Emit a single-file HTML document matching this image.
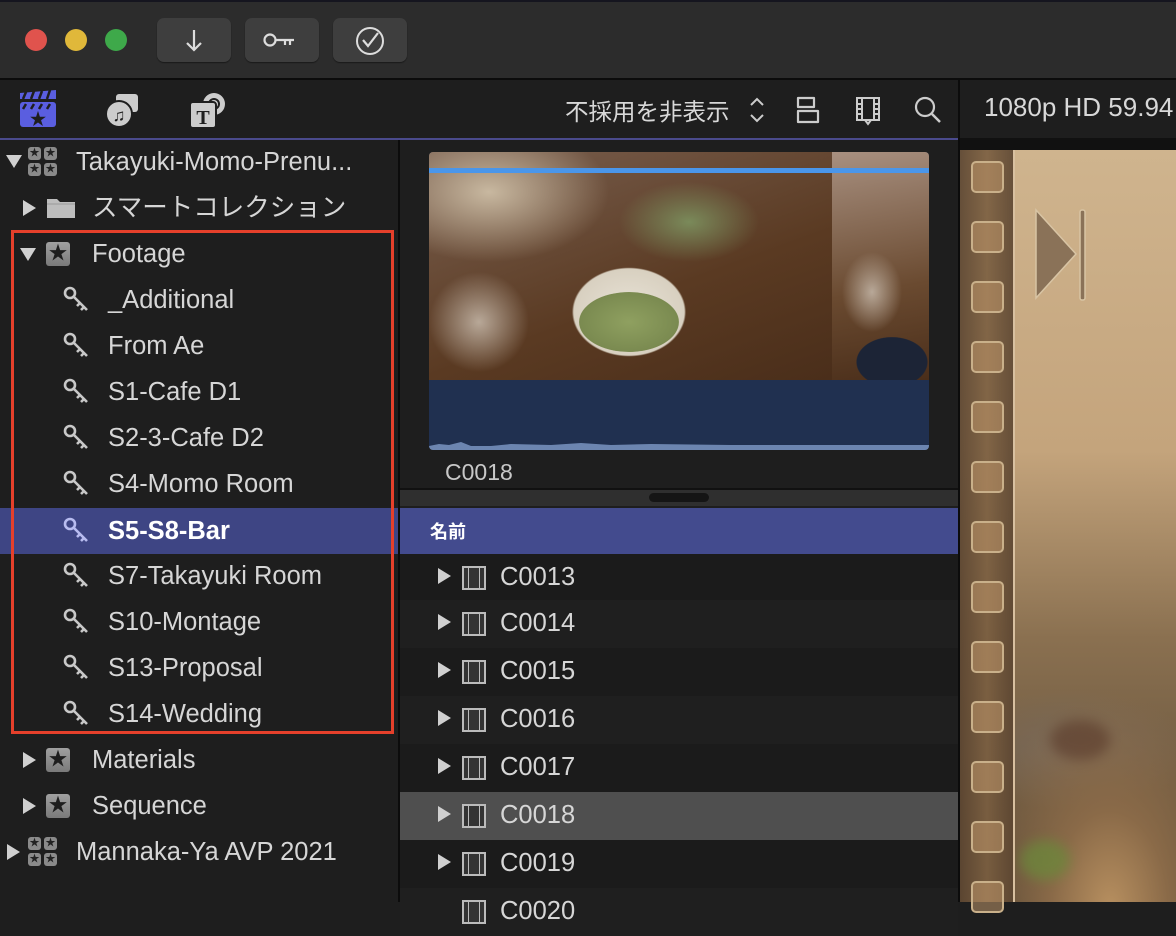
<!DOCTYPE html>
<html><head><meta charset="utf-8"><style>
*{margin:0;padding:0;box-sizing:border-box}
body{width:1176px;height:902px;overflow:hidden;background:#1e1e1e;font-family:"Liberation Sans","Noto Sans CJK JP",sans-serif;color:#d6d6d6;position:relative}
.abs{position:absolute}
.btn{position:absolute;top:18px;width:74px;height:44px;background:#3e3e3e;border-radius:7px;box-shadow:0 1px 1px #1a1a1a}
.row{position:absolute;left:0;width:398px;height:46px;font-size:25.5px;line-height:46px;white-space:nowrap}
.tri{position:absolute;width:0;height:0}
.tr{border-top:8px solid transparent;border-bottom:8px solid transparent;border-left:13px solid #d0d0d0}
.td{border-left:8px solid transparent;border-right:8px solid transparent;border-top:13px solid #d0d0d0}
.star{position:absolute;width:24px;height:24px;background:linear-gradient(#a0a0a0,#7a7a7a);border-radius:3px;color:#1e1e1e;font-size:19px;line-height:24px;text-align:center}
.lib{position:absolute;width:30px;height:30px}
.lib i{position:absolute;width:13px;height:13px;background:#8a8a8a;border-radius:3px;color:#222;font-size:10px;line-height:13px;text-align:center;font-style:normal}
.crow{position:absolute;left:400px;width:558px;height:48px;font-size:25.5px;line-height:46px}
.film{position:absolute;left:62px;top:12px;width:24px;height:24px;border:2px solid #bbb;background:#333}
.film:before,.film:after{content:"";position:absolute;top:0;bottom:0;width:4px;border-left:1px solid #bbb;border-right:1px solid #bbb}
.film:before{left:0;border-left:none}.film:after{right:0;border-right:none}
.hole{position:absolute;left:971px;width:33px;height:32px;border:2px solid #c9b08a;border-radius:5px;background:rgba(190,150,105,.55)}
</style></head><body>
<div class="abs" style="left:0;top:0;width:1176px;height:78px;background:#2c2c2c;border-top:2px solid #15151f"></div>
<div class="abs" style="left:25px;top:29px;width:22px;height:22px;border-radius:50%;background:#e0534d"></div>
<div class="abs" style="left:65px;top:29px;width:22px;height:22px;border-radius:50%;background:#e0b83a"></div>
<div class="abs" style="left:105px;top:29px;width:22px;height:22px;border-radius:50%;background:#3ea94a"></div>
<div class="btn" style="left:157px"><svg width="74" height="44"><path d="M37 12v20M30 25l7 7 7-7" stroke="#ddd" stroke-width="2.2" fill="none"/></svg></div>
<div class="btn" style="left:245px"><svg width="74" height="44"><circle cx="25" cy="22" r="5.5" stroke="#ddd" stroke-width="2.2" fill="none"/><path d="M31 22h18M40 22v5M45 22v5" stroke="#ddd" stroke-width="2.2" fill="none"/></svg></div>
<div class="btn" style="left:333px"><svg width="74" height="44"><circle cx="37" cy="23" r="13" stroke="#ddd" stroke-width="2" fill="none"/><path d="M30 22l5 6 10-13" stroke="#ddd" stroke-width="2.2" fill="none"/></svg></div>
<div class="abs" style="left:0;top:78px;width:1176px;height:2px;background:#0c0c0c"></div>
<div class="abs" style="left:0;top:80px;width:958px;height:58px;background:#1e1e1e"></div>
<svg class="abs" style="left:18px;top:90px" width="40" height="40"><rect x="2" y="12" width="36" height="25" rx="3" fill="#5a5ee0"/><path d="M2 3l36-3v9H2z" fill="#5a5ee0"/><path d="M8 2l-3 7M16 1l-3 8M24 1l-3 8M32 0l-3 9M8 14l-3 5M16 14l-3 5M24 14l-3 5M32 14l-3 5" stroke="#1e1e1e" stroke-width="2.5"/><text x="20" y="35" font-size="17" fill="#1e1e1e" text-anchor="middle">★</text></svg>
<svg class="abs" style="left:104px;top:90px" width="40" height="40"><rect x="12" y="4" width="22" height="18" rx="3" fill="#ccc"/><circle cx="15" cy="24" r="13" fill="#ccc" stroke="#1e1e1e" stroke-width="2"/><text x="15" y="31" font-size="17" fill="#1e1e1e" text-anchor="middle">♫</text></svg>
<svg class="abs" style="left:188px;top:90px" width="40" height="40"><circle cx="26" cy="14" r="11" fill="#ccc"/><circle cx="26" cy="14" r="5" fill="none" stroke="#1e1e1e" stroke-width="2"/><rect x="2" y="12" width="26" height="26" rx="3" fill="#ccc" stroke="#1e1e1e" stroke-width="2"/><text x="15" y="34" font-size="20" font-weight="bold" font-family="Liberation Serif" fill="#1e1e1e" text-anchor="middle">T</text></svg>
<div class="abs" style="left:565px;top:93px;font-size:23.5px;color:#d8d8d8;white-space:nowrap">不採用を非表示</div>
<svg class="abs" style="left:748px;top:96px" width="18" height="28"><path d="M3 9l6-6 6 6M3 19l6 6 6-6" stroke="#ccc" stroke-width="2" fill="none"/></svg>
<svg class="abs" style="left:794px;top:95px" width="30" height="32"><path d="M4 3h16v9H4zM4 16h20v11H4z" stroke="#ccc" stroke-width="2.2" fill="none" stroke-linejoin="round"/></svg>
<svg class="abs" style="left:854px;top:95px" width="30" height="32"><rect x="3" y="3" width="22" height="22" stroke="#ccc" stroke-width="2" fill="none"/><path d="M8 3v22M20 3v22M3 9h5M3 14h5M3 19h5M20 9h5M20 14h5M20 19h5M11 25l3 4 3-4" stroke="#ccc" stroke-width="2" fill="none"/></svg>
<svg class="abs" style="left:912px;top:94px" width="32" height="32"><circle cx="13" cy="13" r="9" stroke="#ccc" stroke-width="2.2" fill="none"/><path d="M20 20l8 8" stroke="#ccc" stroke-width="2.5"/></svg>
<div class="abs" style="left:958px;top:80px;width:2px;height:822px;background:#0c0c0c"></div>
<div class="abs" style="left:960px;top:80px;width:216px;height:58px;background:#1e1e1e"></div>
<div class="abs" style="left:984px;top:92px;font-size:26px;color:#d8d8d8;white-space:nowrap">1080p HD 59.94</div>
<div class="abs" style="left:0;top:138px;width:958px;height:2px;background:#4a4a8c"></div>
<div class="abs" style="left:960px;top:138px;width:216px;height:12px;background:#111"></div>
<div class="abs" style="left:398px;top:140px;width:2px;height:762px;background:#0c0c0c"></div>
<div class="abs" style="left:0;top:508px;width:398px;height:46px;background:#3e4584"></div>
<div class="row" style="top:139px"><div class="tri td" style="left:6px;top:16px"></div><div class="lib" style="left:28px;top:8px"><i style="left:0;top:0">★</i><i style="left:16px;top:0">★</i><i style="left:0;top:16px">★</i><i style="left:16px;top:16px">★</i></div><span class="abs" style="left:76px">Takayuki-Momo-Prenu...</span></div>
<div class="row" style="top:185px"><div class="tri tr" style="left:23px;top:15px"></div><svg class="abs" style="left:46px;top:12px" width="30" height="22"><path d="M1 2h10l3 3h15v16H1z" fill="#bdbdbd"/><path d="M1 7h28" stroke="#999" stroke-width="1"/></svg><span class="abs" style="left:92px">スマートコレクション</span></div>
<div class="row" style="top:231px"><div class="tri td" style="left:20px;top:17px"></div><div class="star" style="left:46px;top:11px">★</div><span class="abs" style="left:92px">Footage</span></div>
<svg width="0" height="0" style="position:absolute"><defs><g id="key"><circle cx="7" cy="7" r="5" stroke="currentColor" stroke-width="2.6" fill="none"/><path d="M11 11l13 13M17 17l-3 3M21 21l-3 3" stroke="currentColor" stroke-width="2.6" fill="none"/></g></defs></svg>
<div class="row" style="top:277px"><svg class="abs" style="left:63px;top:9px;color:#c8c8c8" width="28" height="28"><use href="#key"/></svg><span class="abs" style="left:108px">_Additional</span></div>
<div class="row" style="top:323px"><svg class="abs" style="left:63px;top:9px;color:#c8c8c8" width="28" height="28"><use href="#key"/></svg><span class="abs" style="left:108px">From Ae</span></div>
<div class="row" style="top:369px"><svg class="abs" style="left:63px;top:9px;color:#c8c8c8" width="28" height="28"><use href="#key"/></svg><span class="abs" style="left:108px">S1-Cafe D1</span></div>
<div class="row" style="top:415px"><svg class="abs" style="left:63px;top:9px;color:#c8c8c8" width="28" height="28"><use href="#key"/></svg><span class="abs" style="left:108px">S2-3-Cafe D2</span></div>
<div class="row" style="top:461px"><svg class="abs" style="left:63px;top:9px;color:#c8c8c8" width="28" height="28"><use href="#key"/></svg><span class="abs" style="left:108px">S4-Momo Room</span></div>
<div class="row" style="top:508px;color:#fff;font-weight:bold"><svg class="abs" style="left:63px;top:9px;color:#b8bcf0" width="28" height="28"><use href="#key"/></svg><span class="abs" style="left:108px">S5-S8-Bar</span></div>
<div class="row" style="top:553px"><svg class="abs" style="left:63px;top:9px;color:#c8c8c8" width="28" height="28"><use href="#key"/></svg><span class="abs" style="left:108px">S7-Takayuki Room</span></div>
<div class="row" style="top:599px"><svg class="abs" style="left:63px;top:9px;color:#c8c8c8" width="28" height="28"><use href="#key"/></svg><span class="abs" style="left:108px">S10-Montage</span></div>
<div class="row" style="top:645px"><svg class="abs" style="left:63px;top:9px;color:#c8c8c8" width="28" height="28"><use href="#key"/></svg><span class="abs" style="left:108px">S13-Proposal</span></div>
<div class="row" style="top:691px"><svg class="abs" style="left:63px;top:9px;color:#c8c8c8" width="28" height="28"><use href="#key"/></svg><span class="abs" style="left:108px">S14-Wedding</span></div>
<div class="row" style="top:737px"><div class="tri tr" style="left:23px;top:15px"></div><div class="star" style="left:46px;top:11px">★</div><span class="abs" style="left:92px">Materials</span></div>
<div class="row" style="top:783px"><div class="tri tr" style="left:23px;top:15px"></div><div class="star" style="left:46px;top:11px">★</div><span class="abs" style="left:92px">Sequence</span></div>
<div class="row" style="top:829px"><div class="tri tr" style="left:7px;top:15px"></div><div class="lib" style="left:28px;top:8px"><i style="left:0;top:0">★</i><i style="left:16px;top:0">★</i><i style="left:0;top:16px">★</i><i style="left:16px;top:16px">★</i></div><span class="abs" style="left:76px">Mannaka-Ya AVP 2021</span></div>
<div class="abs" style="left:11px;top:230px;width:383px;height:504px;border:3px solid #e5402b"></div>
<div class="abs" style="left:429px;top:152px;width:500px;height:298px;border-radius:4px;overflow:hidden;background:#203050">
 <div class="abs" style="left:0;top:0;width:403px;height:228px;background:radial-gradient(ellipse 92px 72px at 200px 160px,#e8e2d6 0,#d8d0c0 60%,transparent 62%),radial-gradient(ellipse 50px 50px at 50px 170px,#b8a898 0,transparent 100%),radial-gradient(ellipse 120px 70px at 60px 40px,#c8b8a0 0,transparent 100%),radial-gradient(ellipse 70px 40px at 260px 70px,#7a8a5a 0,transparent 100%),linear-gradient(160deg,#7a6050,#5a3a22 60%,#4a2e1a)"></div>
 <div class="abs" style="left:150px;top:140px;width:100px;height:60px;border-radius:50%;background:radial-gradient(#8fa060,#7a8a50 70%,transparent 72%)"></div>
 <div class="abs" style="left:403px;top:0;width:97px;height:228px;background:radial-gradient(ellipse 30px 40px at 40px 140px,#b8a898 0,transparent 100%),radial-gradient(ellipse 50px 35px at 60px 210px,#1c2436 0,#1c2436 70%,transparent 72%),linear-gradient(170deg,#a89080,#6a4a30 60%,#4a2e1a)"></div>
 <div class="abs" style="left:0;top:16px;width:500px;height:5px;background:#4a96ea"></div>
 <svg class="abs" style="left:0;top:280px" width="500" height="18"><path d="M0 18V14l10-2 10 1 12-3 10 4 20 0 20-2 40 1 30-2 30 2 40-1 80 1 208 0V18z" fill="#6c85b0"/></svg>
</div>
<div class="abs" style="left:445px;top:459px;font-size:23px;color:#c8c8c8">C0018</div>
<div class="abs" style="left:400px;top:488px;width:558px;height:2px;background:#111"></div>
<div class="abs" style="left:400px;top:490px;width:558px;height:16px;background:#2f2f2f"></div>
<div class="abs" style="left:649px;top:493px;width:60px;height:9px;border-radius:5px;background:#151515"></div>
<div class="abs" style="left:400px;top:508px;width:558px;height:46px;background:#434b8e;color:#fff;font-size:18px;font-weight:bold;line-height:48px;padding-left:30px">名前</div>
<div class="crow" style="top:554px;background:#1b1b1b"><div class="tri tr" style="left:38px;top:14px"></div><div class="film"></div><span class="abs" style="left:100px">C0013</span></div>
<div class="crow" style="top:600px;background:#1f1f1f"><div class="tri tr" style="left:38px;top:14px"></div><div class="film"></div><span class="abs" style="left:100px">C0014</span></div>
<div class="crow" style="top:648px;background:#1b1b1b"><div class="tri tr" style="left:38px;top:14px"></div><div class="film"></div><span class="abs" style="left:100px">C0015</span></div>
<div class="crow" style="top:696px;background:#1f1f1f"><div class="tri tr" style="left:38px;top:14px"></div><div class="film"></div><span class="abs" style="left:100px">C0016</span></div>
<div class="crow" style="top:744px;background:#1b1b1b"><div class="tri tr" style="left:38px;top:14px"></div><div class="film"></div><span class="abs" style="left:100px">C0017</span></div>
<div class="crow" style="top:792px;background:#4f4f4f"><div class="tri tr" style="left:38px;top:14px"></div><div class="film"></div><span class="abs" style="left:100px">C0018</span></div>
<div class="crow" style="top:840px;background:#1b1b1b"><div class="tri tr" style="left:38px;top:14px"></div><div class="film"></div><span class="abs" style="left:100px">C0019</span></div>
<div class="crow" style="top:888px;background:#1f1f1f"><div class="film"></div><span class="abs" style="left:100px">C0020</span></div>
<div class="abs" style="left:960px;top:150px;width:216px;height:752px;background:radial-gradient(ellipse 130px 220px at 150px 760px,#b89060 0,#8a6a48 45%,transparent 100%),radial-gradient(ellipse 120px 60px at 110px 600px,#7a6a5a 0,transparent 100%),linear-gradient(180deg,#cfb48e 0,#c4a47c 40%,#8a7050 65%,#5a4a36 100%)"></div>
<div class="abs" style="left:1050px;top:720px;width:60px;height:40px;border-radius:50%;background:#5a3a2a;opacity:.6;filter:blur(6px)"></div>
<div class="abs" style="left:1020px;top:840px;width:50px;height:40px;border-radius:50%;background:#6a8a3a;opacity:.7;filter:blur(6px)"></div>
<div class="abs" style="left:960px;top:150px;width:54px;height:752px;background:linear-gradient(90deg,#5a4430,#7a5e40 50%,#5a4430);opacity:.9"></div>
<div class="abs" style="left:1013px;top:150px;width:2px;height:752px;background:#d8c0a0"></div>
<div class="hole" style="top:161px"></div><div class="hole" style="top:221px"></div><div class="hole" style="top:281px"></div><div class="hole" style="top:341px"></div><div class="hole" style="top:401px"></div><div class="hole" style="top:461px"></div><div class="hole" style="top:521px"></div><div class="hole" style="top:581px"></div><div class="hole" style="top:641px"></div><div class="hole" style="top:701px"></div><div class="hole" style="top:761px"></div><div class="hole" style="top:821px"></div><div class="hole" style="top:881px"></div>
<svg class="abs" style="left:1032px;top:206px" width="60" height="98"><path d="M4 4L44 48 4 92z" fill="#8a7258" stroke="#d8c4a4" stroke-width="1.5"/><rect x="48" y="4" width="5" height="90" rx="2" fill="#8a7258" stroke="#d8c4a4" stroke-width="1.5"/></svg>
</body></html>
